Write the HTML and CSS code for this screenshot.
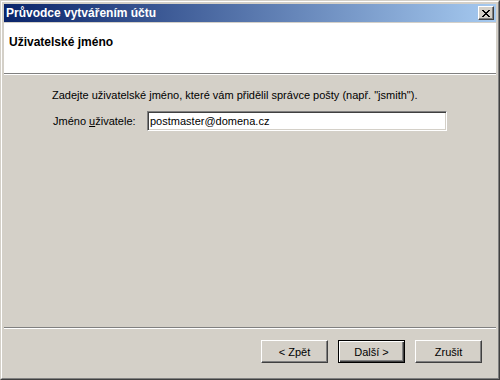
FILE: index.html
```html
<!DOCTYPE html>
<html lang="cs">
<head>
    <meta charset="UTF-8">
    <title>Průvodce vytvářením účtu</title>
    <link rel="stylesheet" href="styles.css">
</head>
<body>
    <div class="window">
        <div class="frame">
            <div class="titlebar">
                <span class="title">Průvodce vytvářením účtu</span>
                <button class="close" aria-label="Zavřít">
                    <svg width="8" height="7" viewBox="0 0 8 7">
                        <path d="M0 0h2v1h1v1h2v-1h1v-1h2v1h-1v1h-1v1h-1v1h1v1h1v1h1v1h-2v-1h-1v-1h-2v1h-1v1h-2v-1h1v-1h1v-1h1v-1h-1v-1h-1v-1h-1z" fill="#000"/>
                    </svg>
                </button>
            </div>

            <div class="header">
                <h1>Uživatelské jméno</h1>
            </div>

            <div class="content">
                <p class="intro">Zadejte uživatelské jméno, které vám přidělil správce pošty (např. "jsmith").</p>
                <div class="field">
                    <label for="username">Jméno <u>u</u>živatele:</label>
                    <input id="username" type="text" value="postmaster@domena.cz">
                </div>
            </div>

            <div class="separator"></div>

            <div class="buttons">
                <button class="btn">&lt; Zpět</button>
                <button class="btn default">Další &gt;</button>
                <button class="btn">Zrušit</button>
            </div>
        </div>
    </div>
</body>
</html>
```

FILE: styles.css
```css
body {
    margin: 0;
    font-family: 'Liberation Sans', Arial, sans-serif;
    font-size: 11px;
    color: black;
    background-color: #d4d0c8;
}

.window {
    width: 500px;
    height: 380px;
    box-sizing: border-box;
    border: 1px solid;
    border-color: #d4d0c8 #404040 #404040 #d4d0c8;
}

.frame {
    height: 100%;
    box-sizing: border-box;
    border: 1px solid;
    border-color: #fff #808080 #808080 #fff;
    padding: 2px;
    background-color: #d4d0c8;
    display: flex;
    flex-direction: column;
}

.titlebar {
    height: 18px;
    display: flex;
    align-items: center;
    justify-content: space-between;
    background: linear-gradient(to right, #0a246a, #a6caf0);
    margin-bottom: 1px;
}

.title {
    color: white;
    font-size: 12px;
    font-weight: bold;
    padding-left: 2px;
}

.close {
    width: 16px;
    height: 14px;
    margin-right: 2px;
    padding: 0;
    display: flex;
    align-items: center;
    justify-content: center;
    background-color: #d4d0c8;
    border: 1px solid;
    border-color: #fff #404040 #404040 #fff;
    box-shadow: inset -1px -1px #808080;
}

.header {
    height: 51px;
    background-color: white;
    border-bottom: 1px solid #808080;
    box-shadow: 0 1px #fff;
    padding: 12px 0 0 5px;
    box-sizing: border-box;
}

.header h1 {
    margin: 0;
    font-size: 12px;
    font-weight: bold;
}

.content {
    flex: 1;
    padding: 15px 0 0 48px;
}

.intro {
    margin: 0 0 10px 0;
}

.field {
    display: flex;
    align-items: center;
}

.field label {
    width: 94px;
    padding-left: 1px;
}

.field input {
    width: 300px;
    height: 20px;
    box-sizing: border-box;
    margin: 0;
    padding: 1px 2px;
    font-family: inherit;
    font-size: 11px;
    border: 1px solid;
    border-color: #808080 #fff #fff #808080;
    box-shadow: inset 1px 1px #404040, inset -1px -1px #d4d0c8;
    outline: none;
    background-color: white;
}

.separator {
    border-top: 1px solid #808080;
    border-bottom: 1px solid #fff;
}

.buttons {
    display: flex;
    justify-content: flex-end;
    gap: 10px;
    padding: 11px 14px 13px 0;
}

.btn {
    width: 67px;
    height: 23px;
    padding: 0;
    font-family: inherit;
    font-size: 11px;
    color: black;
    background-color: #d4d0c8;
    border: 1px solid;
    border-color: #fff #404040 #404040 #fff;
    box-shadow: inset -1px -1px #808080;
}

.btn.default {
    border: 1px solid #000;
    box-shadow: inset 1px 1px #fff, inset -1px -1px #404040, inset -2px -2px #808080;
}
```
